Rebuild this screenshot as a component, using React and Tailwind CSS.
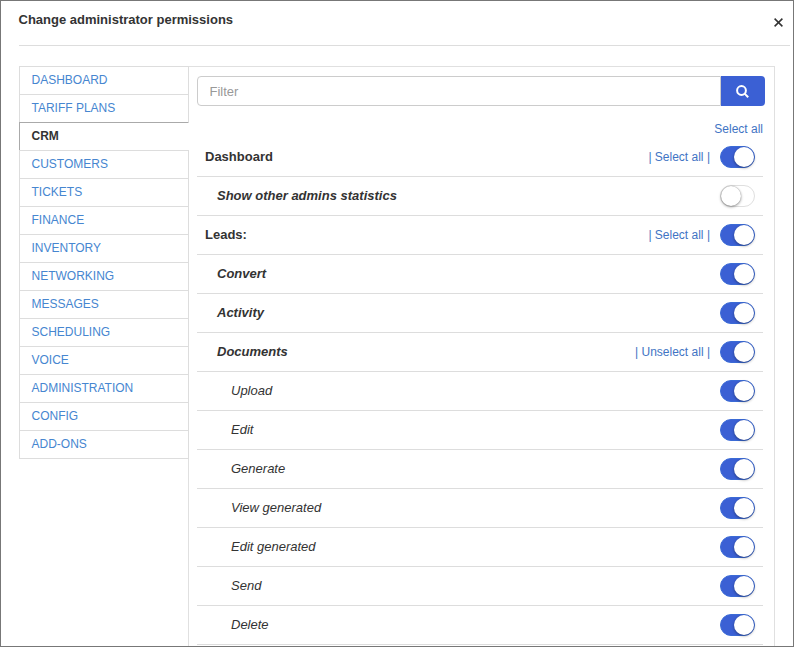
const TABS = ['DASHBOARD', 'TARIFF PLANS', 'CRM', 'CUSTOMERS', 'TICKETS', 'FINANCE', 'INVENTORY', 'NETWORKING', 'MESSAGES', 'SCHEDULING', 'VOICE', 'ADMINISTRATION', 'CONFIG', 'ADD-ONS'];

const LEVELS = ['pl-2 font-bold', 'pl-5 font-bold italic', 'pl-[34px] italic'];

const ROWS = [
  { label: 'Dashboard', level: 0, on: true, action: 'Select all' },
  { label: 'Show other admins statistics', level: 1, on: false },
  { label: 'Leads:', level: 0, on: true, action: 'Select all' },
  { label: 'Convert', level: 1, on: true },
  { label: 'Activity', level: 1, on: true },
  { label: 'Documents', level: 1, on: true, action: 'Unselect all' },
  { label: 'Upload', level: 2, on: true },
  { label: 'Edit', level: 2, on: true },
  { label: 'Generate', level: 2, on: true },
  { label: 'View generated', level: 2, on: true },
  { label: 'Edit generated', level: 2, on: true },
  { label: 'Send', level: 2, on: true },
  { label: 'Delete', level: 2, on: true },
];

function Toggle({ on }) {
  return (
    <button
      role="switch"
      aria-checked={on}
      className={`flex h-[22px] w-[35px] shrink-0 rounded-full border ${
        on ? 'justify-end border-[#3b6bd6] bg-[#3b60d4]' : 'justify-start border-[#dfdfdf] bg-white'
      }`}
    >
      <span
        className={`size-5 rounded-full bg-white ${
          on ? 'shadow-[0_1px_3px_rgba(0,0,0,0.4)]' : 'shadow-[0_1px_3px_rgba(0,0,0,0.4),0_0_1px_rgba(0,0,0,0.4)]'
        }`}
      />
    </button>
  );
}

function Row({ label, level, on, action }) {
  return (
    <div className={`flex h-[39px] shrink-0 items-center border-b border-[#ddd] pr-2 ${LEVELS[level]}`}>
      <span className="flex-1">{label}</span>
      {action && <span className="mr-2.5 text-xs font-normal not-italic text-[#3f74c4]">| {action} |</span>}
      <Toggle on={on} />
    </div>
  );
}

export default function App() {
  return (
    <div className="flex h-[647px] w-[794px] flex-col overflow-hidden border border-[#777] bg-white font-['Liberation_Sans',Arial,sans-serif] text-[13px] leading-[18px] text-[#333]">
      <header className="ml-[18px] mr-[3px] flex h-[45px] shrink-0 justify-between border-b border-[#ddd]">
        <h1 className="-ml-[0.5px] pt-2.5 font-bold">Change administrator permissions</h1>
        <button aria-label="Close" className="mr-[7px] mt-[17px] size-[9px]">
          <svg viewBox="0 0 9 9" className="block size-[9px]" fill="none" stroke="#333" strokeWidth="1.5">
            <path d="M.6.6 8.4 8.4M8.4.6.6 8.4" />
          </svg>
        </button>
      </header>
      <main className="ml-[18px] mt-5 flex min-h-0 flex-1">
        <nav className="z-10 -mr-px w-[170px] shrink-0 text-xs">
          {TABS.map((tab) => (
            <div
              key={tab}
              className={`flex h-7 items-center border-x border-t pb-px pl-[11.5px] ${
                tab === 'CRM'
                  ? 'border-l-[#aaa] border-r-white border-t-[#aaa] font-bold text-[#333]'
                  : 'border-[#ddd] text-[#4686d0]'
              }`}
            >
              {tab}
            </div>
          ))}
          <div className="h-px bg-[#ddd]" />
        </nav>
        <section className="w-[587px] shrink-0 overflow-hidden border-x border-t border-[#e0e0e0] pl-2 pr-[9px] pt-[9px]">
          <div className="flex h-[30px]">
            <input
              placeholder="Filter"
              className="w-[524px] rounded-l border border-[#ccc] px-[11.5px] pt-0.5 placeholder:text-[#999] outline-none"
            />
            <button aria-label="Search" className="flex w-11 items-center justify-center rounded-r bg-[#3b60d4] pr-px pt-px">
              <svg viewBox="0 0 13 13" className="size-[13px]" fill="none" stroke="#fff" strokeWidth="2">
                <circle cx="5.5" cy="5.5" r="4.4" />
                <path d="m8.6 8.6 3.6 3.6" />
              </svg>
            </button>
          </div>
          <div className="mr-0.5 flex h-8 items-end justify-end text-xs leading-[18px] text-[#3f74c4]">
            Select all
          </div>
          <div className="mr-0.5">
            {ROWS.map((row) => (
              <Row key={row.label} {...row} />
            ))}
          </div>
        </section>
      </main>
    </div>
  );
}
